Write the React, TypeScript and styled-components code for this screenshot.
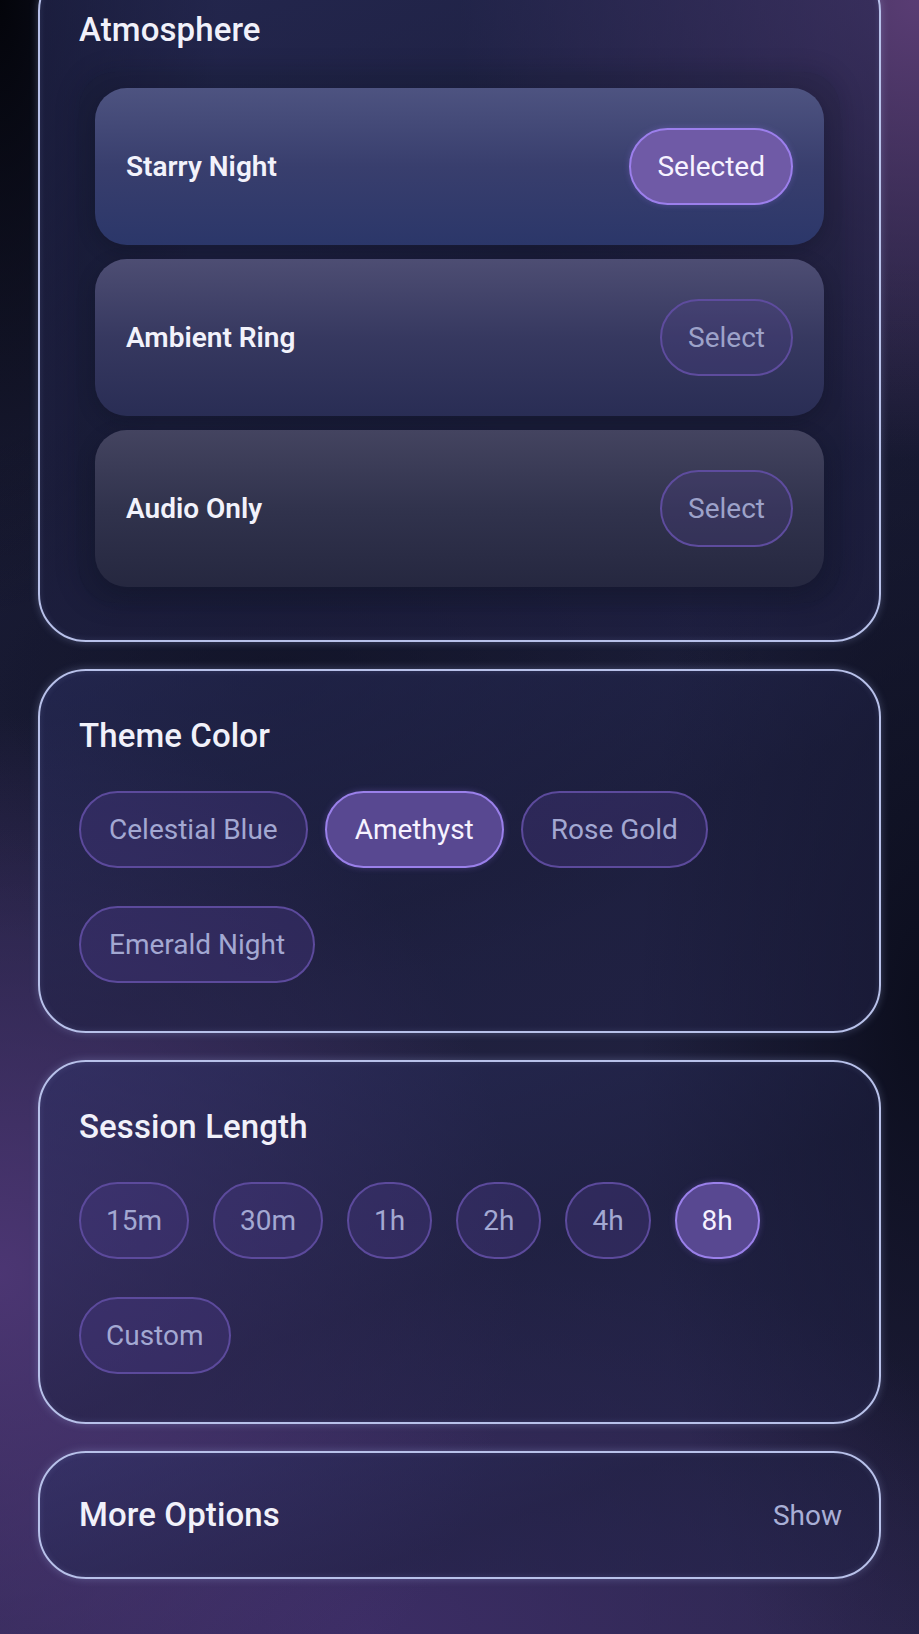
import React from "react";
import styled, { createGlobalStyle, css } from "styled-components";

const Global = createGlobalStyle`
  html, body {
    margin: 0;
    padding: 0;
    background: #15172d;
  }
  body {
    font-family: Roboto, "Noto Sans", "Liberation Sans", sans-serif;
    -webkit-font-smoothing: antialiased;
  }
  * { box-sizing: border-box; }
`;

const Page = styled.div`
  width: 919px;
  height: 1634px;
  overflow: hidden;
  background:
    radial-gradient(ellipse 220px 620px at 0% 0%, rgba(2, 3, 8, 0.95), rgba(2, 3, 8, 0) 100%),
    radial-gradient(ellipse 460px 460px at 100% 0%, rgba(96, 64, 122, 0.9), rgba(96, 64, 122, 0) 100%),
    radial-gradient(ellipse 520px 560px at 0% 78%, rgba(80, 56, 120, 0.9), rgba(80, 56, 120, 0) 100%),
    radial-gradient(ellipse 700px 420px at 40% 100%, rgba(62, 46, 104, 0.9), rgba(62, 46, 104, 0) 100%),
    radial-gradient(ellipse 280px 760px at 100% 62%, rgba(10, 12, 26, 0.9), rgba(10, 12, 26, 0) 100%),
    radial-gradient(ellipse 500px 300px at 30% 42%, rgba(12, 14, 30, 0.6), rgba(12, 14, 30, 0) 100%),
    linear-gradient(180deg, #1a1c36 0%, #1c1e3a 50%, #29264a 100%);
`;

const Column = styled.div`
  display: flex;
  flex-direction: column;
  gap: 27px;
  padding: 0 38px;
  margin-top: -37px;
`;

const Card = styled.section<{ $compact?: boolean }>`
  border: 2.5px solid #b8c1ea;
  border-radius: 48px;
  background: linear-gradient(
    160deg,
    rgba(44, 48, 100, 0.55) 0%,
    rgba(30, 32, 66, 0.6) 55%,
    rgba(34, 34, 72, 0.55) 100%
  );
  box-shadow: 0 0 8px rgba(170, 182, 240, 0.3), inset 0 0 6px rgba(170, 182, 240, 0.15);
  padding: 45px 39px 48px 39px;
  ${(p) =>
    p.$compact &&
    css`
      padding: 0 37px 0 39px;
      height: 128px;
      display: flex;
      align-items: center;
      justify-content: space-between;
    `}
`;

const Title = styled.h2`
  margin: 0;
  font-size: 33px;
  line-height: 40px;
  font-weight: 500;
  color: #f1f1fa;
  letter-spacing: 0.1px;
`;

const OptionList = styled.div`
  margin-top: 22px;
  margin-bottom: -11px;
  padding: 16px;
  border-radius: 36px;
  background: rgba(14, 16, 34, 0.16);
  box-shadow: 0 0 24px rgba(10, 12, 28, 0.22);
  display: flex;
  flex-direction: column;
  gap: 14px;
`;

const OptionRow = styled.div<{ $tone: "blue" | "mid" | "grey" }>`
  height: 157px;
  border-radius: 32px;
  padding: 0 31px;
  display: flex;
  align-items: center;
  justify-content: space-between;
  box-shadow: 0 6px 18px rgba(8, 10, 24, 0.25);
  ${(p) =>
    p.$tone === "blue"
      ? css`
          background: linear-gradient(
            180deg,
            rgba(80, 86, 132, 0.95) 0%,
            rgba(58, 64, 112, 0.95) 50%,
            rgba(44, 56, 108, 0.95) 100%
          );
        `
      : p.$tone === "mid"
      ? css`
          background: linear-gradient(
            180deg,
            rgba(80, 80, 118, 0.95) 0%,
            rgba(56, 58, 98, 0.95) 50%,
            rgba(42, 46, 86, 0.95) 100%
          );
        `
      : css`
          background: linear-gradient(
            180deg,
            rgba(70, 70, 98, 0.95) 0%,
            rgba(50, 52, 78, 0.95) 50%,
            rgba(38, 40, 64, 0.95) 100%
          );
        `}
`;

const OptionLabel = styled.span`
  font-size: 28px;
  font-weight: 600;
  color: #f2f2fb;
`;

const Pill = styled.button<{ $active?: boolean; $pad?: number }>`
  height: 77px;
  padding: 0 ${(p) => p.$pad ?? 26}px;
  border-radius: 39px;
  font-family: inherit;
  font-size: 28px;
  font-weight: 400;
  display: inline-flex;
  align-items: center;
  justify-content: center;
  white-space: nowrap;
  cursor: pointer;
  border: 2px solid #5c4a9c;
  background: rgba(76, 58, 138, 0.34);
  color: #a3a8d2;
  ${(p) =>
    p.$active &&
    css`
      border: 2.5px solid #9a80ea;
      background: #584891;
      color: #f6f2ff;
      box-shadow: 0 0 6px rgba(150, 120, 240, 0.3);
    `}
`;

const RowPill = styled(Pill)<{ $active?: boolean }>`
  ${(p) =>
    p.$active
      ? css`
          background: #6f5aa6;
          border-color: #9c7fec;
        `
      : css`
          background: rgba(80, 62, 140, 0.25);
          border-color: #5e4c9e;
          color: #9da2c9;
        `}
`;

const ChipWrap = styled.div<{ $gap: number }>`
  margin-top: 35px;
  display: flex;
  flex-wrap: wrap;
  column-gap: ${(p) => p.$gap}px;
  row-gap: 38px;
`;

const ShowLink = styled.span`
  font-size: 28px;
  color: #a9afd6;
`;

const atmospheres = [
  { name: "Starry Night", tone: "blue" as const, selected: true },
  { name: "Ambient Ring", tone: "mid" as const, selected: false },
  { name: "Audio Only", tone: "grey" as const, selected: false },
];

const themes = ["Celestial Blue", "Amethyst", "Rose Gold", "Emerald Night"];
const lengths = ["15m", "30m", "1h", "2h", "4h", "8h", "Custom"];

export default function App() {
  return (
    <>
      <Global />
      <Page>
        <Column>
          <Card>
            <Title>Atmosphere</Title>
            <OptionList>
              {atmospheres.map((a) => (
                <OptionRow key={a.name} $tone={a.tone}>
                  <OptionLabel>{a.name}</OptionLabel>
                  <RowPill $active={a.selected}>{a.selected ? "Selected" : "Select"}</RowPill>
                </OptionRow>
              ))}
            </OptionList>
          </Card>

          <Card>
            <Title>Theme Color</Title>
            <ChipWrap $gap={17}>
              {themes.map((t) => (
                <Pill key={t} $pad={28} $active={t === "Amethyst"}>
                  {t}
                </Pill>
              ))}
            </ChipWrap>
          </Card>

          <Card>
            <Title>Session Length</Title>
            <ChipWrap $gap={24}>
              {lengths.map((l) => (
                <Pill key={l} $pad={25} $active={l === "8h"}>
                  {l}
                </Pill>
              ))}
            </ChipWrap>
          </Card>

          <Card $compact>
            <Title>More Options</Title>
            <ShowLink>Show</ShowLink>
          </Card>
        </Column>
      </Page>
    </>
  );
}
